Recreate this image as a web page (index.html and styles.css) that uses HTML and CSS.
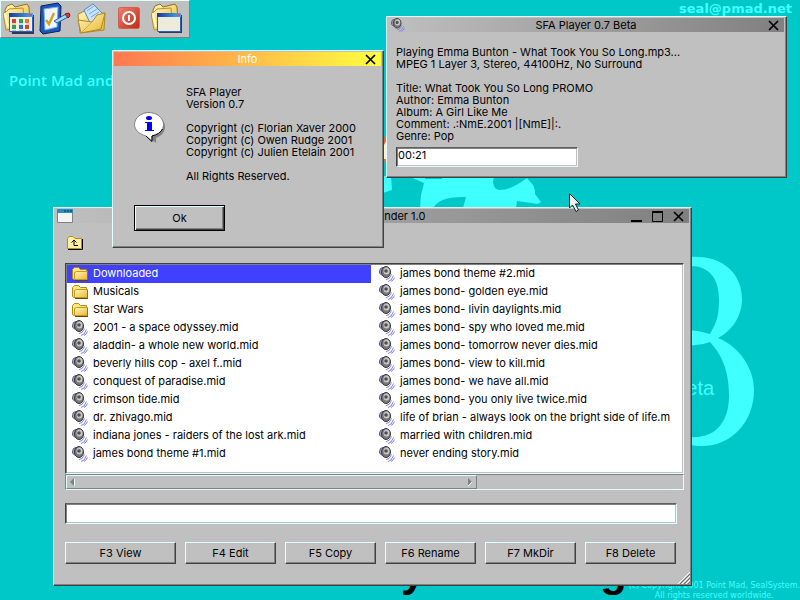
FILE: index.html
```html
<!DOCTYPE html>
<html lang="en">
<head>
<meta charset="utf-8">
<title>Seal Desktop</title>
<link rel="stylesheet" href="styles.css">
</head>
<body>
<svg class="defs" aria-hidden="true">
  <defs>
    <linearGradient id="gold" x1="0" y1="0" x2="1" y2="1">
      <stop offset="0" stop-color="#fff7c0"/><stop offset="1" stop-color="#e8b830"/>
    </linearGradient>
    <linearGradient id="sky" x1="0" y1="0" x2="1" y2="0">
      <stop offset="0" stop-color="#1838a0"/><stop offset="1" stop-color="#48a8f8"/>
    </linearGradient>
    <linearGradient id="red" x1="0" y1="0" x2="1" y2="1">
      <stop offset="0" stop-color="#f08070"/><stop offset="1" stop-color="#c02810"/>
    </linearGradient>
  </defs>
  <symbol id="folder" viewBox="0 0 16 16">
    <path d="M.5 12.500V3.500L2.500 1.500H6.500L8.500 3.500H14.500V13.500H2Z" fill="#ffe878" stroke="#b88810"/>
    <path d="M2.500 13.500V6.500L4.500 5.500H15.500V13.500Z" fill="url(#gold)" stroke="#c89818"/>
    <path d="M3 14.500H16V6" fill="none" stroke="#604808"/>
  </symbol>
  <symbol id="sound" viewBox="0 0 16 16">
    <path d="M4 1.500L1.500 2.500Q.5 4 .5 7L3 9.500" fill="#a8a8c8" stroke="#505090"/>
    <ellipse cx="7" cy="6" rx="4.500" ry="5.500" fill="#787878" stroke="#383838"/>
    <ellipse cx="7.500" cy="5" rx="3" ry="3.500" fill="#c8c8c8"/>
    <circle cx="7" cy="5" r="1.800" fill="#505050"/>
    <path d="M7 13.500L10 12.500L12.500 8.500M9 15.500L12 14L14.500 9.500M12 15.500L14 14L15.500 11.500" fill="none" stroke="#8080e8"/>
  </symbol>
  <symbol id="cross" viewBox="0 0 11 11">
    <path d="M1 1L10 10M10 1L1 10" fill="none" stroke="#000" stroke-width="1.700"/>
  </symbol>
  <symbol id="bigfolder" viewBox="0 0 32 32">
    <path d="M4 25L2 7L4 3L9 1L12 4L24 1L26 4L27 20Z" fill="url(#gold)" stroke="#907020"/>
    <path d="M0 10L3 9L6 6L20 5L22 24L3 27Z" fill="url(#gold)" stroke="#b89030"/>
    <path d="M2 11L5 24" stroke="#fff8d0" stroke-width="2"/>
  </symbol>
</svg>

<main class="desktop">
  <svg class="seal" viewBox="0 0 170 80" aria-hidden="true">
    <path d="M0 46H8L9 60L0 63ZM25 46H111L110 52Q111 60 117 60Q128 60 144 48L150 55L152 60V64L158 72L155 74L134 71L133 78H37L38 65L41 53Z" fill="#40ffff"/>
    <path d="M42 46H59V49H42ZM50 78Q57 66 83 67L80 78Z" fill="#00c8c8"/>
    <path d="M0 7H4V32H0Z" fill="#e86840"/><path d="M1 15L4 10V29H1Z" fill="#fff0c8"/>
  </svg>
  <svg class="emblem" viewBox="0 0 70 200" aria-hidden="true">
    <path d="M0 4C32 2 52 20 52 46C52 63 42 78 28 85C50 94 64 116 64 137C64 170 40 195 8 193L0 192V184C26 186 39 168 39 143C39 116 31 101 20 89Q10 93 0 92V77Q10 78 20 81C26 70 29 64 29 47C29 26 20 13 0 13Z" fill="#40ffff"/>
  </svg>
  <p class="beta">Beta</p>
  <p class="motto">Point Mad and</p>
  <p class="mail">seal@pmad.net</p>
  <p class="brand brand-y">y</p>
  <p class="brand brand-g">g</p>
  <p class="legal">(c) Copyright 2001 Point Mad, SealSystem.<br>All rights reserved worldwide.</p>

  <nav class="toolbar" aria-label="Launcher">
    <button type="button" aria-label="Programs"><svg viewBox="0 0 32 32">
      <use href="#bigfolder"/>
      <path d="M7 12H31V31H9Z" fill="#303860"/>
      <path d="M6.500 10.500H29.500V28.500H6.500Z" fill="#f0f0e0" stroke="#3060b0"/>
      <path d="M6 10H30V14H6Z" fill="url(#sky)"/><path d="M26 11H29V13H26Z" fill="#f05030"/>
      <path d="M9 16H13V20H9ZM22 22H26V26H22Z" fill="#d84030"/><path d="M16 16H20V20H16ZM9 22H13V26H9Z" fill="#30a050"/><path d="M22 16H26V20H22Z" fill="#e07830"/><path d="M16 22H20V26H16Z" fill="#3070c8"/>
      <path d="M9 27.500H27M9 21H27" stroke="#c0b8d0" stroke-dasharray="4 3"/>
    </svg></button>
    <button type="button" aria-label="Notes"><svg viewBox="0 0 32 32">
      <path d="M1 3L18 0L21 3L20 28L3 31L0 28Z" fill="#1858c0" stroke="#102050"/>
      <path d="M4 6L18 4L17 24L5 27Z" fill="#f0f6ff" stroke="#80b0e8"/>
      <path d="M6 17L9 21L14 10" fill="none" stroke="#d8a020" stroke-width="2.500"/>
      <path d="M14 18L26 11L28 14L17 20Z" fill="#a8d8f8" stroke="#2860a0"/>
      <path d="M25 11L29 10L30 13L28 15Z" fill="#d84030" stroke="#801810"/>
    </svg></button>
    <button type="button" aria-label="Documents"><svg viewBox="0 0 32 32">
      <path d="M1 11L8 8L10 11L28 10L27 27L3 30Z" fill="url(#gold)" stroke="#b08828"/>
      <path d="M7 7L16 1L26 11L14 22Z" fill="#c8e4ff" stroke="#5888c8"/>
      <path d="M10 8L17 3M12 11L20 6M14 14L22 9" stroke="#70a8e0"/>
      <path d="M1 17L15 19L20 12L28 10L24 26L4 30Z" fill="url(#gold)" stroke="#b08828"/>
      <path d="M15 19L5 29" stroke="#d8ac38"/>
    </svg></button>
    <button type="button" aria-label="Shut down"><svg viewBox="0 0 32 32">
      <rect x="4.500" y="4.500" width="21" height="21" rx="2" fill="url(#red)" stroke="#d06050"/>
      <circle cx="15" cy="15" r="6" fill="none" stroke="#fff" stroke-width="2"/>
      <path d="M15 12V18" stroke="#fff" stroke-width="2"/>
    </svg></button>
    <button type="button" aria-label="Windows"><svg viewBox="0 0 32 32">
      <use href="#bigfolder"/>
      <path d="M8 12H31V30H8Z" fill="#303860"/>
      <path d="M6.500 10.500H29.500V28.500H6.500Z" fill="#ecebdc" stroke="#3060b0"/>
      <path d="M6 10H30V14H6Z" fill="url(#sky)"/><path d="M26 11H29V13H26Z" fill="#f05030"/>
    </svg></button>
  </nav>

  <section class="window finder" aria-label="File manager">
    <header class="title">
      <svg class="app-icon" viewBox="0 0 16 14" aria-hidden="true"><path d="M.5.5H15.500V13.500H.5Z" fill="#f4f4f4" stroke="#808080"/><path d="M0 0H16V4H0Z" fill="#2890c0"/><path d="M7 2H15" stroke="#003050" stroke-dasharray="2 1"/></svg>
      <h2>Seal Commander 1.0</h2>
      <span class="controls">
        <button type="button" aria-label="Minimize"><svg viewBox="0 0 11 11"><path d="M0 10H11" stroke="#000" stroke-width="2"/></svg></button>
        <button type="button" aria-label="Maximize"><svg viewBox="0 0 11 11"><path d="M.5 1H10.500V10.500H.5Z" fill="none" stroke="#000"/><path d="M0 1H11" stroke="#000" stroke-width="2"/></svg></button>
        <button type="button" aria-label="Close"><svg><use href="#cross"/></svg></button>
      </span>
    </header>
    <div class="finder-body">
      <button type="button" class="up" aria-label="Up one level"><svg viewBox="0 0 16 14"><path d="M.5 12V2.500L2 .5H6L8 2.500H14.500V12.500H.5Z" fill="#fff0a0" stroke="#b09020"/><path d="M1 13.500H15.500V3" fill="none" stroke="#000"/><path d="M7 5V9.500H11M4.500 6.500L7 4L9.500 6.500" fill="none" stroke="#000"/></svg></button>
      <ul class="files">
        <li class="selected"><svg><use href="#folder"/></svg>Downloaded</li>
        <li><svg><use href="#folder"/></svg>Musicals</li>
        <li><svg><use href="#folder"/></svg>Star Wars</li>
        <li><svg><use href="#sound"/></svg>2001 - a space odyssey.mid</li>
        <li><svg><use href="#sound"/></svg>aladdin- a whole new world.mid</li>
        <li><svg><use href="#sound"/></svg>beverly hills cop - axel f..mid</li>
        <li><svg><use href="#sound"/></svg>conquest of paradise.mid</li>
        <li><svg><use href="#sound"/></svg>crimson tide.mid</li>
        <li><svg><use href="#sound"/></svg>dr. zhivago.mid</li>
        <li><svg><use href="#sound"/></svg>indiana jones - raiders of the lost ark.mid</li>
        <li><svg><use href="#sound"/></svg>james bond theme #1.mid</li>
        <li><svg><use href="#sound"/></svg>james bond theme #2.mid</li>
        <li><svg><use href="#sound"/></svg>james bond- golden eye.mid</li>
        <li><svg><use href="#sound"/></svg>james bond- livin daylights.mid</li>
        <li><svg><use href="#sound"/></svg>james bond- spy who loved me.mid</li>
        <li><svg><use href="#sound"/></svg>james bond- tomorrow never dies.mid</li>
        <li><svg><use href="#sound"/></svg>james bond- view to kill.mid</li>
        <li><svg><use href="#sound"/></svg>james bond- we have all.mid</li>
        <li><svg><use href="#sound"/></svg>james bond- you only live twice.mid</li>
        <li><svg><use href="#sound"/></svg>life of brian - always look on the bright side of life.m</li>
        <li><svg><use href="#sound"/></svg>married with children.mid</li>
        <li><svg><use href="#sound"/></svg>never ending story.mid</li>
      </ul>
      <div class="scrollbar">
        <div class="thumb">
          <svg viewBox="0 0 6 8"><path d="M4 0V8L0 4Z" fill="#808080"/><path d="M4.500 1V8" stroke="#e0ffff"/></svg>
          <svg viewBox="0 0 6 8"><path d="M1 0V8L5 4Z" fill="#808080"/><path d="M1 8L5 4" stroke="#e0ffff"/></svg>
        </div>
      </div>
      <input class="field command" type="text" aria-label="Command">
      <div class="actions">
        <button type="button" class="raised">F3 View</button>
        <button type="button" class="raised">F4 Edit</button>
        <button type="button" class="raised">F5 Copy</button>
        <button type="button" class="raised">F6 Rename</button>
        <button type="button" class="raised">F7 MkDir</button>
        <button type="button" class="raised">F8 Delete</button>
      </div>
    </div>
    <svg class="grip" viewBox="0 0 12 12" aria-hidden="true"><path d="M0 12L12 0M4 12L12 4M8 12L12 8" stroke="#fff"/><path d="M2 12L12 2M6 12L12 6M10 12L12 10" stroke="#707070"/></svg>
  </section>

  <section class="window player" aria-label="SFA Player">
    <header class="title">
      <svg class="app-icon"><use href="#sound"/></svg>
      <h2>SFA Player 0.7 Beta</h2>
      <span class="controls"><button type="button" aria-label="Close"><svg><use href="#cross"/></svg></button></span>
    </header>
    <div class="player-body">
      <p>Playing Emma Bunton - What Took You So Long.mp3...<br>MPEG 1 Layer 3, Stereo, 44100Hz, No Surround</p>
      <p>Title: What Took You So Long PROMO<br>Author: Emma Bunton<br>Album: A Girl Like Me<br>Comment: .:NmE.2001 |[NmE]|:.<br>Genre: Pop</p>
      <input class="field time" type="text" value="00:21" aria-label="Elapsed time">
    </div>
  </section>

  <section class="window info" aria-label="Info">
    <header class="title active">
      <h2>Info</h2>
      <span class="controls"><button type="button" aria-label="Close"><svg><use href="#cross"/></svg></button></span>
    </header>
    <div class="info-body">
      <svg class="bubble" viewBox="0 0 32 32" aria-hidden="true">
        <path d="M17 3C26 4 32 9 31 16Q30 23 22 26V31L16 26Z" fill="#808080"/>
        <path d="M15 .5C7 .5.5 6 .5 12.500C.5 18 5 22 12 24L18 29.500V24C25 23 29.500 18 29.500 12.500C29.500 6 23 .5 15 .5Z" fill="#fff" stroke="#808080"/>
        <path d="M12 24L18 29.500V24Q26 22 28.500 17" fill="none" stroke="#000"/>
        <ellipse cx="15" cy="6" rx="3" ry="2" fill="#00f"/>
        <path d="M11 10H18V18H20V19H11V18H13V11H11Z" fill="#00f"/>
      </svg>
      <div>
        <p>SFA Player<br>Version 0.7</p>
        <p>Copyright (c) Florian Xaver 2000<br>Copyright (c) Owen Rudge 2001<br>Copyright (c) Julien Etelain 2001</p>
        <p>All Rights Reserved.</p>
      </div>
    </div>
    <button type="button" class="raised ok">Ok</button>
  </section>

  <svg class="pointer" viewBox="0 0 12 20" aria-hidden="true"><path d="M.5.5V15L3.500 12L7 18.500L9.500 17L6.500 11H11Z" fill="#f0f0f0" stroke="#202020"/></svg>
</main>
</body>
</html>
```
FILE: styles.css
```css
* { box-sizing: border-box; }

body {
  margin: 0;
  font: 11px/12px Inter, "Liberation Sans", sans-serif;
  color: #000;
}

h2, p, ul { margin: 0; padding: 0; font-size: inherit; font-weight: normal; }
svg { display: block; overflow: visible; }
button, input { font: inherit; color: inherit; padding: 0; border: 0; background: none; }

.defs { position: absolute; width: 0; height: 0; }

.desktop {
  position: relative;
  min-height: 100vh;
  overflow: hidden;
  background: #00c8c8;
}

/* Wallpaper */
.seal { position: absolute; left: 383px; top: 130px; width: 170px; height: 80px; }
.emblem { position: absolute; left: 690px; top: 253px; width: 70px; height: 200px; }
.beta, .motto, .mail, .legal { position: absolute; color: #40ffff; }
.beta { left: 673px; top: 376px; font: 20px/24px "Liberation Sans", sans-serif; }
.motto { left: 9px; top: 70px; font: 600 15px/20px "Open Sans", sans-serif; }
.mail { right: 8px; top: 1px; font: bold 13px/16px "DejaVu Sans", sans-serif; }
.legal { right: 0; top: 581px; font: 8px/10px "DejaVu Sans", sans-serif; text-align: center; }
.brand { position: absolute; font: bold 44px/50px "Liberation Sans", sans-serif; }
.brand-y { left: 401px; top: 546px; }
.brand-g { left: 600px; top: 546px; }

/* Launcher */
.toolbar {
  position: absolute;
  left: 0;
  top: 0;
  display: flex;
  gap: 5px;
  padding: 2px 6px 2px 2px;
  background: #c0c0c0;
  border: 1px solid;
  border-color: #e0ffff #808080 #808080 #e0ffff;
}
.toolbar svg { width: 32px; height: 32px; }

/* Windows */
.window {
  position: absolute;
  padding: 1px 2px 2px 1px;
  background: #c0c0c0;
  border: 1px solid;
  border-color: #e0ffff #404040 #404040 #e0ffff;
  box-shadow: inset -1px -1px #808080;
}
.title {
  display: grid;
  grid-template-columns: 1fr auto 1fr;
  align-items: center;
  height: 14px;
  background: linear-gradient(90deg, #c0c0c0, #808080);
}
.title h2 { grid-column: 2; grid-row: 1; }
.title.active { color: #fff; background: linear-gradient(90deg, #ff7850, #ffff40); }
.app-icon { grid-column: 1; grid-row: 1; width: 16px; height: 14px; margin-left: 2px; }
.controls { grid-column: 3; grid-row: 1; display: flex; gap: 10px; justify-content: flex-end; padding-right: 5px; }
.controls svg { width: 11px; height: 11px; }

.raised {
  background: #c0c0c0;
  border: 1px solid;
  border-color: #e0ffff #404040 #404040 #e0ffff;
  box-shadow: inset -1px -1px #808080;
}
.field {
  display: block;
  background: #fff;
  border: 1px solid;
  border-color: #606060 #e0ffff #e0ffff #404040;
  box-shadow: inset 1px 1px #808080, inset -1px -1px #c0c0c0;
}

/* File manager */
.finder { left: 53px; top: 207px; width: 639px; }
.finder-body { padding: 13px 5px 19px 10px; }
.up, .up svg { display: block; width: 16px; height: 14px; }
.up { margin-left: 2px; }
.files {
  display: grid;
  grid-auto-flow: column;
  grid-template: repeat(11, 18px) / 304px 1fr;
  column-gap: 3px;
  height: 211px;
  margin-top: 13px;
  background: #fff;
  border: 1px solid;
  border-color: #404040 #e0ffff #e0ffff #404040;
  padding: 1px;
  box-shadow: inset 1px 1px #808080, inset -1px -1px #c0c0c0;
  list-style: none;
}
.files li {
  display: flex;
  align-items: flex-start;
  gap: 5px;
  min-width: 0;
  margin-right: 4px;
  padding-left: 5px;
  overflow: hidden;
  line-height: 16px;
  white-space: nowrap;
}
.files li.selected { margin-right: 0; background: #4040ff; color: #fff; }
.files svg { flex: none; width: 16px; height: 16px; margin-top: 1px; }
.scrollbar {
  height: 16px;
  border: 1px solid;
  border-color: #808080 #e0ffff #e0ffff #808080;
}
.thumb {
  display: flex;
  justify-content: space-between;
  align-items: center;
  width: 411px;
  height: 14px;
  padding: 0 3px;
  border: 1px solid;
  border-color: #e0ffff #808080 #808080 #e0ffff;
}
.thumb svg { width: 6px; height: 8px; }
.command { width: 612px; height: 21px; margin-top: 13px; }
.actions { display: flex; gap: 9px; margin: 18px 8px 0 0; }
.actions .raised { flex: 1; height: 22px; }
.actions .raised:first-child { flex: none; width: 111px; }
.grip { position: absolute; right: 1px; bottom: 1px; width: 12px; height: 12px; }

/* Player */
.player { left: 386px; top: 16px; width: 401px; }
.player-body { padding: 14px 8px 8px; }
.player-body p { margin-bottom: 12px; }
.time { width: 182px; height: 20px; margin-top: -7px; padding: 0 1px 4px; }

/* Info dialog */
.info { left: 112px; top: 50px; width: 272px; }
.info-body { display: flex; align-items: flex-start; gap: 20px; padding: 20px 20px 11px; }
.info-body p { margin-bottom: 12px; }
.bubble { width: 32px; height: 32px; margin-top: 26px; }
.ok {
  width: 91px;
  height: 26px;
  margin: 0 0 14px 20px;
  border-color: #000;
  box-shadow: inset 1px 1px #e0ffff, inset -1px -1px #404040, inset -2px -2px #808080;
}

.pointer { position: absolute; left: 569px; top: 193px; width: 12px; height: 20px; }
```
